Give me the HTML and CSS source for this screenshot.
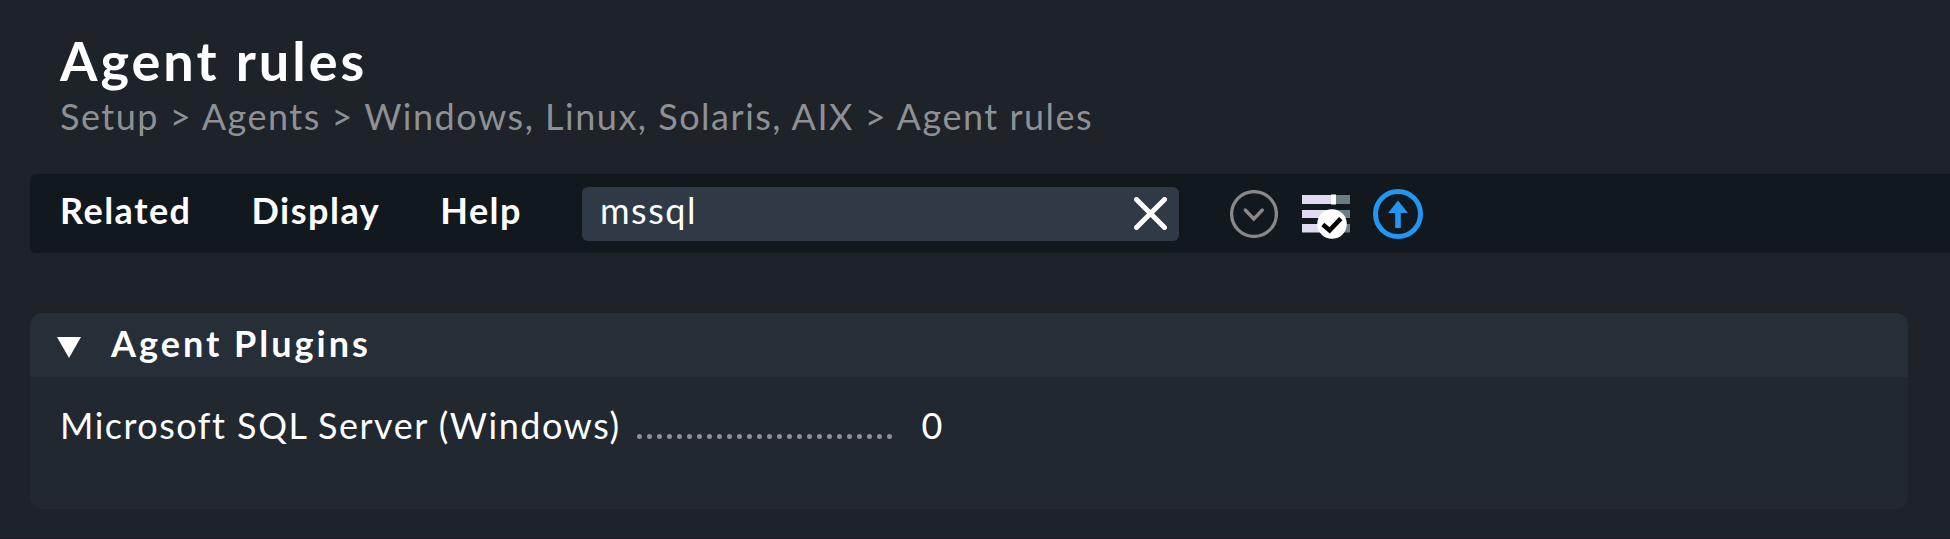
FILE: index.html
```html
<!DOCTYPE html>
<html lang="en">
<head>
<meta charset="utf-8">
<title>Agent rules</title>
<link rel="stylesheet" href="styles.css">
</head>
<body>
<header class="page-header">
  <h1 class="title">Agent rules</h1>
  <nav class="breadcrumb">Setup &gt; Agents &gt; Windows, Linux, Solaris, AIX &gt; Agent rules</nav>
</header>
<div class="menubar">
  <nav class="menu">
    <span class="menu-item">Related</span>
    <span class="menu-item">Display</span>
    <span class="menu-item">Help</span>
  </nav>
  <div class="search">
    <span class="search-text">mssql</span>
    <svg class="clear" viewBox="0 0 33 33"><path d="M2.5 2.5 30.5 30.5M30.5 2.5 2.5 30.5" fill="none" stroke="#fff" stroke-width="5" stroke-linecap="round"/></svg>
  </div>
  <div class="icons">
    <svg class="icon-more" viewBox="0 0 48 48"><circle cx="24" cy="24" r="22.4" fill="none" stroke="#888" stroke-width="3.3"/><path d="M15.3 20 23.8 29 32.3 20" fill="none" stroke="#888" stroke-width="3.4" stroke-linecap="round"/></svg>
    <svg class="icon-rules" viewBox="0 0 48 48">
      <path d="M0 6H30V15H0ZM0 21H30V29H0ZM0 35H30V43.5H0Z" fill="#e1daf3"/>
      <path d="M30 6H48V15H30ZM30 21H48V29H30ZM30 35H48V43.5H30Z" fill="#6b7c85"/>
      <path d="M29 5.5H34V15.5H29Z" fill="#fff"/>
      <circle cx="30" cy="35" r="14.8" fill="#fff"/>
      <path d="M20.8 35.5 27.6 41.3 38.8 29.6" fill="none" stroke="#000" stroke-width="4.6"/>
    </svg>
    <svg class="icon-up" viewBox="0 0 50 50"><circle cx="25" cy="25" r="22.5" fill="none" stroke="#2196f3" stroke-width="5"/><path d="M25 11.5 35 24H27.8V39H22.2V24H15Z" fill="#2196f3"/></svg>
  </div>
</div>
<main class="panel">
  <div class="panel-head">
    <svg class="fold" viewBox="0 0 24 21"><path d="M0 0H24L12 21Z" fill="#fff"/></svg>
    <h2 class="panel-title">Agent Plugins</h2>
  </div>
  <div class="row">
    <span class="row-name">Microsoft SQL Server (Windows)</span>
    <svg class="dots" viewBox="0 0 257 5"><path d="M2.5 2.5H254" fill="none" stroke="#8f9193" stroke-width="5" stroke-linecap="round" stroke-dasharray="0 10"/></svg>
    <span class="row-count">0</span>
  </div>
</main>
</body>
</html>
```
FILE: styles.css
```css
* { box-sizing: border-box; }
body {
  margin: 0;
  height: 539px;
  overflow: hidden;
  background: #1e2229;
  border-bottom: 1px solid #1c1a24;
  color: #fff;
  font: 36px/44px Lato, sans-serif;
  letter-spacing: 1.5px;
  white-space: nowrap;
}
.page-header { height: 174px; padding: 28px 0 0 60px; }
.title { margin: 0; font-size: 54px; line-height: 66px; font-weight: 700; letter-spacing: 3px; }
.breadcrumb { margin-top: 0; color: #8e9194; letter-spacing: 1.51px; }
.menubar {
  display: flex;
  align-items: flex-start;
  height: 79px;
  margin-left: 30px;
  padding-left: 30px;
  background: #11181e;
  border-radius: 6px 0 0 6px;
}
.menu { display: flex; gap: 60px; width: 522px; padding-top: 14px; font-weight: 700; letter-spacing: 1.5px; }
.search {
  display: flex;
  justify-content: space-between;
  width: 597px;
  height: 54px;
  margin-top: 13px;
  padding: 1px 12px 0 18px;
  background: #303a46;
  border-radius: 6px;
}
.clear { width: 33px; height: 33px; margin-top: 9px; }
.icons { display: flex; padding: 15px 0 0 51px; }
.icon-more { width: 48px; height: 48px; margin-top: 1px; }
.icon-rules { width: 48px; height: 48px; margin-left: 24px; overflow: visible; }
.icon-up { width: 50px; height: 50px; margin-left: 23px; }
.panel {
  width: 1878px;
  height: 196px;
  margin: 60px 0 0 30px;
  background: #21282f;
  border-radius: 12px;
  overflow: hidden;
}
.panel-head { display: flex; height: 64px; padding-left: 27px; background: #262e37; }
.fold { width: 24px; height: 21px; margin: 24px 30px 0 0; }
.panel-title { margin: 0; padding-top: 8px; font-size: 36px; line-height: 44px; font-weight: 700; letter-spacing: 3px; }
.row { display: flex; padding: 26px 0 0 30px; }
.row-name { width: 577px; }
.dots { width: 257px; height: 5px; margin-top: 31px; }
.row-count { margin-left: 27.5px; }
```
